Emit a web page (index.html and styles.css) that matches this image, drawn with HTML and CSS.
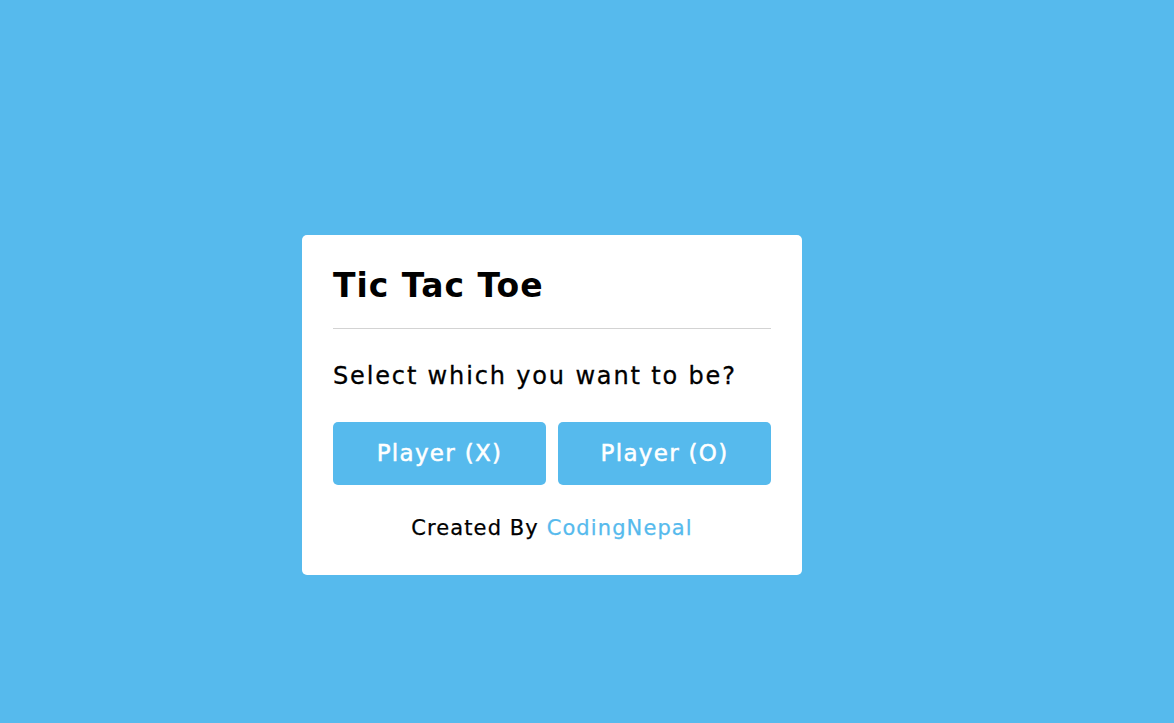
FILE: index.html
```html
<!DOCTYPE html>
<html lang="en">
<head>
<meta charset="utf-8">
<title>Tic Tac Toe</title>
<link rel="stylesheet" href="styles.css">
</head>
<body>
<div class="stage">
  <section class="select-box">
    <header class="box-header">Tic Tac Toe</header>
    <div class="content">
      <div class="title">Select which you want to be?</div>
      <div class="options">
        <button class="option playerX">Player (X)</button>
        <button class="option playerO">Player (O)</button>
      </div>
      <div class="credit">Created By <a class="credit-link" href="#">CodingNepal</a></div>
    </div>
  </section>
</div>
</body>
</html>
```

FILE: styles.css
```css
* {
  box-sizing: border-box;
}

html, body {
  margin: 0;
  padding: 0;
}

body {
  background: #56baed;
  height: 723px;
  font-family: "DejaVu Sans", "Noto Sans", sans-serif;
  color: #000;
}

.stage {
  padding: 235px 0 0 302px;
}

.select-box {
  background: #fff;
  width: 500px;
  border-radius: 5px;
  padding: 20px 31px 32px;
}

.box-header {
  font-size: 33px;
  font-weight: 700;
  letter-spacing: 1px;
  line-height: 62px;
  padding-bottom: 11px;
  border-bottom: 1px solid #d3d3d3;
}

.title {
  font-size: 24px;
  font-weight: 400;
  letter-spacing: 1.85px;
  line-height: 36px;
  margin: 29px 0 28px;
  -webkit-text-stroke: 0.3px currentColor;
}

.options {
  display: flex;
  gap: 12px;
}

.option {
  flex: 1;
  height: 63px;
  border: none;
  border-radius: 5px;
  background: #56baed;
  color: #fff;
  font-family: inherit;
  font-size: 23px;
  font-weight: 400;
  letter-spacing: 1.3px;
  padding: 0 0 2px;
  cursor: pointer;
  -webkit-text-stroke: 0.5px currentColor;
}

.credit {
  text-align: center;
  margin-top: 28px;
  font-size: 21px;
  font-weight: 400;
  letter-spacing: 1.1px;
  line-height: 30px;
  -webkit-text-stroke: 0.25px currentColor;
}

.credit-link {
  color: #56baed;
  text-decoration: none;
}
```
